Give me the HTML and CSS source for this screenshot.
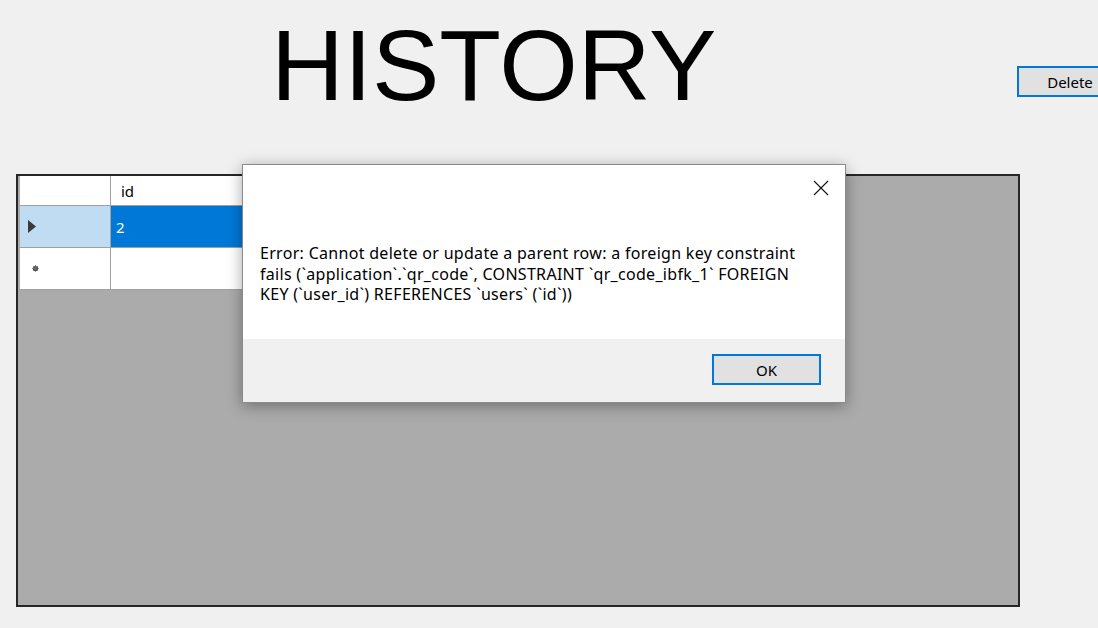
FILE: index.html
```html
<!DOCTYPE html>
<html>
<head>
<meta charset="utf-8">
<link rel="stylesheet" href="styles.css">
</head>
<body>
<div class="form">
  <header class="top">
    <h1 class="title">HISTORY</h1>
    <button class="btn delete">Delete</button>
  </header>
  <div class="gridview">
    <div class="table">
      <div class="rh"></div>
      <div class="cell head">id</div>
      <div class="rh sel">
        <svg class="tri" width="8" height="13" viewBox="0 0 8 13"><path d="M0 0 L8 6.5 L0 13 Z" fill="#3a3a3a"/></svg>
      </div>
      <div class="cell selcell">2</div>
      <div class="rh">
        <svg class="star" width="7" height="7" viewBox="0 0 7 7"><circle cx="3.5" cy="3.5" r="2.6" fill="#4a4a4a"/><path d="M3.5 0 V7 M0 3.5 H7 M1 1 L6 6 M6 1 L1 6" stroke="#6a6a6a" stroke-width="0.8"/></svg>
      </div>
      <div class="cell"></div>
    </div>
  </div>
  <div class="dialog">
    <div class="dlg-body">
      <button class="close" aria-label="Close">
        <svg width="16" height="16" viewBox="0 0 16 16"><path d="M1 1 L15 15 M15 1 L1 15" stroke="#111" stroke-width="1.1"/></svg>
      </button>
      <p class="msg">Error: Cannot delete or update a parent row: a foreign key constraint fails (`application`.`qr_code`, CONSTRAINT `qr_code_ibfk_1` FOREIGN KEY (`user_id`) REFERENCES `users` (`id`))</p>
    </div>
    <div class="dlg-foot">
      <button class="btn ok">OK</button>
    </div>
  </div>
</div>
</body>
</html>
```

FILE: styles.css
```css
html, body {
  margin: 0;
  padding: 0;
}
body {
  background: #f0f0f0;
  width: 1098px;
  height: 628px;
  overflow: hidden;
  font-family: "Noto Sans", "Open Sans", sans-serif;
  color: #000;
}
.form {
  position: relative;
  width: 1098px;
  height: 628px;
}
.top {
  display: grid;
  grid-template-columns: 1017px 106px;
  height: 174px;
}
.title {
  margin: 15px 0 0 271px;
  font-family: "Liberation Sans", Arial, sans-serif;
  font-weight: normal;
  font-size: 101px;
  line-height: 100px;
  letter-spacing: 0;
}
.btn {
  font-family: "Noto Sans", sans-serif;
  font-size: 15px;
  color: #000;
  background: #e1e1e1;
  border: 2px solid #0078d7;
  box-sizing: border-box;
  padding: 0;
  margin: 0;
}
.delete {
  margin-top: 66px;
  width: 106px;
  height: 31px;
  align-self: start;
}
.gridview {
  margin-left: 16px;
  width: 1004px;
  height: 433px;
  box-sizing: border-box;
  border: 2px solid #262626;
  padding-left: 2px;
  background: #ababab;
}
.table {
  display: inline-grid;
  grid-template-columns: 90px 200px;
  grid-template-rows: 29px 41px 41px;
  gap: 1px;
  background: #a0a0a0;
  padding: 0 1px 1px 0;
}
.rh {
  background: #fff;
  display: flex;
  align-items: center;
  padding-left: 8px;
}
.rh.sel {
  background: #bfdcf3;
}
.star {
  margin-left: 4px;
}
.cell {
  background: #fff;
  font-size: 15px;
  display: flex;
  align-items: center;
  padding-left: 10px;
}
.cell.selcell {
  background: #0078d7;
  color: #fff;
  padding-left: 5px;
}
.dialog {
  position: absolute;
  left: 242px;
  top: 164px;
  width: 604px;
  height: 239px;
  box-sizing: border-box;
  border: 1px solid #8a8a8a;
  box-shadow: 0 3px 14px rgba(0, 0, 0, 0.35);
  display: flex;
  flex-direction: column;
  background: #f0f0f0;
}
.dlg-body {
  position: relative;
  background: #fff;
  height: 174px;
  padding: 78px 40px 0 17px;
  box-sizing: border-box;
}
.close {
  position: absolute;
  right: 16px;
  top: 15px;
  border: 0;
  background: transparent;
  padding: 0;
  width: 16px;
  height: 16px;
}
.msg {
  margin: 0;
  font-size: 16px;
  letter-spacing: 0.3px;
  line-height: 20.5px;
  color: #000;
}
.dlg-foot {
  flex: 1;
  display: flex;
  justify-content: flex-end;
  align-items: flex-start;
  padding: 15px 24px 0 0;
}
.ok {
  width: 109px;
  height: 31px;
}
```
